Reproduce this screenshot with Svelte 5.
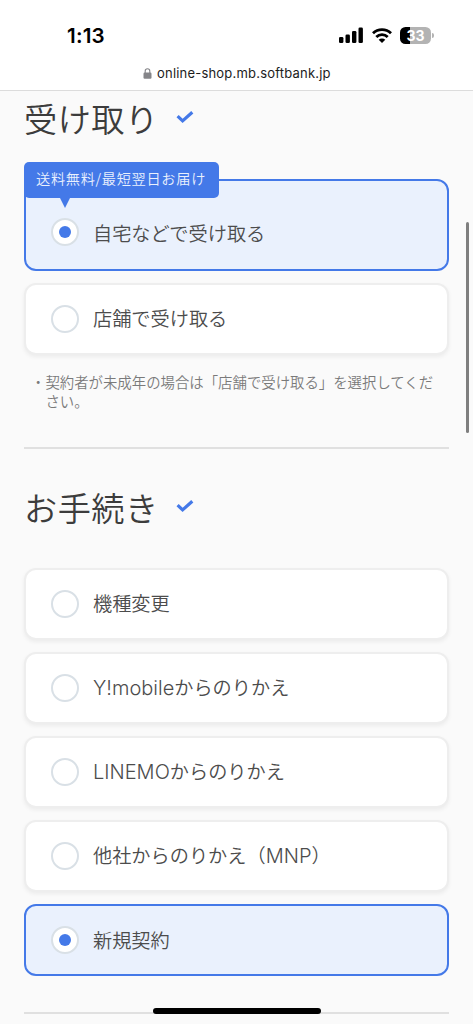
<script lang="ts">
  type Option = { id: string; label: string; badge?: string };

  const receiveOptions: Option[] = [
    { id: 'home', label: '自宅などで受け取る', badge: '送料無料/最短翌日お届け' },
    { id: 'store', label: '店舗で受け取る' },
  ];

  const procedureOptions: Option[] = [
    { id: 'change', label: '機種変更' },
    { id: 'ymobile', label: 'Y!mobileからのりかえ' },
    { id: 'linemo', label: 'LINEMOからのりかえ' },
    { id: 'mnp', label: '他社からのりかえ（MNP）' },
    { id: 'new', label: '新規契約' },
  ];

  let receive = $state('home');
  let procedure = $state('new');

  // Latin runs are set in a different face from the Japanese text
  function splitLatin(text: string) {
    return text.split(/([A-Za-z!]+)/).filter(Boolean);
  }
</script>

{#snippet heading(text: string)}
  <h2>
    <span>{text}</span>
    <svg class="check" width="18" height="14" viewBox="0 0 18 14">
      <path d="M1.6 6.2 6.6 10.9 16.3 2.2" fill="none" stroke="#4479e8" stroke-width="3.2" />
    </svg>
  </h2>
{/snippet}

{#snippet option(item: Option, selected: boolean, select: () => void)}
  <button class="option" class:selected class:with-badge={item.badge} onclick={select}>
    {#if item.badge}
      <span class="badge">{item.badge}</span>
    {/if}
    <span class="radio"></span>
    <span class="label">{#each splitLatin(item.label) as part}<span class:latin={/[A-Za-z]/.test(part)}>{part}</span>{/each}</span>
  </button>
{/snippet}

<div class="screen">
  <header>
    <div class="status">
      <span class="time">1:13</span>
      <div class="indicators">
        <svg width="25" height="16" viewBox="0 0 25 16">
          <rect x="0" y="10" width="4.4" height="6" rx="1.3" />
          <rect x="6.5" y="7.4" width="4.4" height="8.6" rx="1.3" />
          <rect x="13" y="4" width="4.4" height="12" rx="1.3" />
          <rect x="19.5" y="0.5" width="4.4" height="15.5" rx="1.3" />
        </svg>
        <svg class="wifi" width="20" height="15" viewBox="0 0 20 15">
          <g fill="none" stroke="#000" stroke-width="2.8">
            <path d="M1 5.3a12.8 12.8 0 0 1 18 0" />
            <path d="M4.3 9a8.1 8.1 0 0 1 11.4 0" />
          </g>
          <path d="M10 15 6.7 11.8a4.7 4.7 0 0 1 6.6 0z" />
        </svg>
        <div class="battery">
          <span class="level">33</span>
          <span class="cap"></span>
        </div>
      </div>
    </div>
    <div class="address">
      <svg width="9" height="11" viewBox="0 0 9 11">
        <rect x="0.5" y="4.6" width="8" height="6.2" rx="1.2" fill="#858589" />
        <path d="M2.2 5V3.1a2.3 2.3 0 0 1 4.6 0V5" fill="none" stroke="#858589" stroke-width="1.1" />
      </svg>
      <span>online-shop.mb.softbank.jp</span>
    </div>
  </header>

  <main>
    <section class="receive">
      {@render heading('受け取り')}
      <div class="options">
        {#each receiveOptions as item (item.id)}
          {@render option(item, receive === item.id, () => (receive = item.id))}
        {/each}
      </div>
      <p class="note"><span>・</span><span>契約者が未成年の場合は「店舗で受け取る」を選択してください。</span></p>
    </section>

    <section class="procedure">
      {@render heading('お手続き')}
      <div class="options">
        {#each procedureOptions as item (item.id)}
          {@render option(item, procedure === item.id, () => (procedure = item.id))}
        {/each}
      </div>
    </section>
  </main>

  <div class="scrollbar"></div>
  <div class="home-indicator"></div>
</div>

<style>
  :global(body) {
    margin: 0;
    background: #fafafa;
  }

  .screen {
    position: relative;
    width: 473px;
    height: 1024px;
    overflow: hidden;
    background: #fafafa;
    color: #444;
    font-family: 'Noto Sans CJK JP', sans-serif;
  }

  header {
    height: 90px;
    background: #fff;
    border-bottom: 1px solid #dcdcdc;
    color: #000;
    font-family: Inter, sans-serif;
  }

  .status {
    display: flex;
    justify-content: space-between;
    align-items: center;
    height: 62px;
    padding: 8px 39px 0 67px;
    box-sizing: border-box;
  }

  .time {
    font-size: 20.6px;
    font-weight: 600;
    letter-spacing: 0.2px;
  }

  .indicators {
    display: flex;
    align-items: center;
    gap: 8px;
  }

  .battery {
    display: flex;
    align-items: center;
    gap: 1px;
  }

  .level {
    width: 31px;
    height: 17px;
    border-radius: 5.5px;
    background: linear-gradient(to right, #000 10.5px, #b3b3b3 10.5px);
    color: #fff;
    font-size: 14px;
    font-weight: 700;
    line-height: 17px;
    text-align: center;
  }

  .cap {
    width: 2px;
    height: 5px;
    border-radius: 0 2px 2px 0;
    background: #b3b3b3;
  }

  .address {
    display: flex;
    align-items: center;
    gap: 5px;
    height: 22px;
    padding-left: 143px;
    font-size: 13px;
    letter-spacing: 0.2px;
    color: #1c1c1c;
  }

  main {
    padding: 0 24px;
  }

  h2 {
    display: flex;
    align-items: center;
    margin: 0;
    height: 50px;
    font-size: 33.2px;
    font-weight: 350;
    letter-spacing: 0.5px;
    line-height: 50px;
    color: #3c3c3c;
  }

  .check {
    margin-left: 17px;
    margin-bottom: 2px;
  }

  .receive {
    height: 356px;
    border-bottom: 2px solid #e0e0e0;
  }

  .receive h2 {
    padding-top: 2px;
  }

  .receive .options {
    margin-top: 35.5px;
  }

  .procedure {
    height: 563px;
    border-bottom: 2px solid #e0e0e0;
  }

  .procedure h2 {
    padding-top: 33px;
  }

  .procedure .options {
    margin-top: 36px;
  }

  .options {
    display: flex;
    flex-direction: column;
    gap: 12.6px;
  }

  .option {
    position: relative;
    display: flex;
    align-items: center;
    height: 71.5px;
    padding: 0 25px;
    border: 2px solid #eee;
    border-radius: 12px;
    box-sizing: border-box;
    background: #fff;
    box-shadow: 0 2px 4px rgba(0, 0, 0, 0.06);
    color: #4c4c4c;
    font-family: inherit;
    font-size: 19.2px;
    text-align: left;
    cursor: pointer;
  }

  .option.selected {
    border-color: #4479e8;
    background: #eaf1fd;
    box-shadow: none;
  }

  .option.with-badge {
    height: 92px;
    padding-top: 15px;
  }

  .with-badge .label {
    margin: 2px 0 0;
  }

  .badge {
    position: absolute;
    top: -19px;
    left: -2px;
    width: 195px;
    height: 36px;
    border-radius: 5px;
    box-sizing: border-box;
    padding-left: 12px;
    background: #4479e8;
    color: #e9f0fd;
    font-size: 14.2px;
    font-weight: 350;
    letter-spacing: 0.7px;
    line-height: 33px;
    white-space: nowrap;
  }

  .badge::after {
    content: '';
    position: absolute;
    top: 36px;
    left: 36px;
    border: 5px solid transparent;
    border-top: 10px solid #4479e8;
    border-bottom: 0;
  }

  .radio {
    display: flex;
    align-items: center;
    justify-content: center;
    width: 28px;
    height: 28px;
    margin-right: 14px;
    border: 2px solid #d9e0e6;
    border-radius: 50%;
    box-sizing: border-box;
    background: #fff;
  }

  .selected .radio::after {
    content: '';
    width: 12px;
    height: 12px;
    border-radius: 50%;
    background: #4479e8;
  }

  .label {
    margin-bottom: 1px;
    font-weight: 350;
    line-height: 28px;
    white-space: nowrap;
  }

  .latin {
    font-family: Inter, sans-serif;
    font-weight: 300;
    font-size: 20px;
  }

  .note {
    display: flex;
    margin: 17px 0 0;
    padding: 0 6px 0 7px;
    color: #7a7a7a;
    font-size: 14.4px;
    font-weight: 350;
    line-height: 19px;
  }

  .scrollbar {
    position: absolute;
    top: 222px;
    right: 4px;
    width: 3.5px;
    height: 211px;
    border-radius: 2px;
    background: #7f7f7f;
  }

  .home-indicator {
    position: absolute;
    bottom: 10px;
    left: 152.5px;
    width: 168px;
    height: 6px;
    border-radius: 3px;
    background: #000;
  }
</style>
